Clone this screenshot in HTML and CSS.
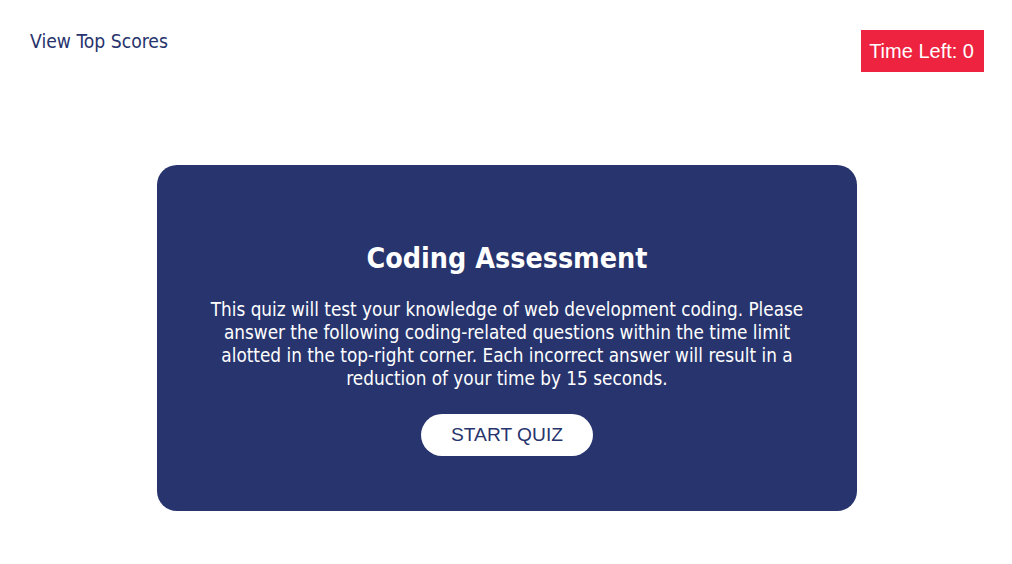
FILE: index.html
```html
<!DOCTYPE html>
<html lang="en">
<head>
<meta charset="utf-8">
<title>Coding Assessment</title>
<link rel="stylesheet" href="styles.css">
</head>
<body>
<header class="topbar">
  <a class="scores-link" href="#">View Top Scores</a>
  <div class="timer">Time Left: 0</div>
</header>
<main class="stage">
  <section class="card">
    <h1 class="title">Coding Assessment</h1>
    <p class="intro">This quiz will test your knowledge of web development coding. Please answer the following coding-related questions within the time limit alotted in the top-right corner. Each incorrect answer will result in a reduction of your time by 15 seconds.</p>
    <button class="start-btn" type="button">START QUIZ</button>
  </section>
</main>
</body>
</html>
```

FILE: styles.css
```css
html, body {
  margin: 0;
  padding: 0;
  background: #ffffff;
}

body {
  font-family: "DejaVu Sans Condensed", "DejaVu Sans", sans-serif;
  color: #27346d;
}

.topbar {
  display: flex;
  justify-content: space-between;
  align-items: flex-start;
  padding: 30px 28px 0 30px;
}

.scores-link {
  margin-top: 1px;
  font-size: 19.2px;
  line-height: 22px;
  color: #27346d;
  text-decoration: none;
}

.timer {
  font-family: "Liberation Sans", Arial, sans-serif;
  font-size: 20px;
  line-height: 22px;
  color: #ffffff;
  background: #ee2340;
  padding: 10px 10px 10px 8px;
}

.stage {
  display: flex;
  justify-content: center;
  padding: 93px 0 0 2px;
}

.card {
  width: 700px;
  height: 346px;
  box-sizing: border-box;
  background: #27346d;
  border-radius: 20px;
  padding: 76px 40px 0;
  display: flex;
  flex-direction: column;
  align-items: center;
  color: #ffffff;
  text-align: center;
}

.title {
  margin: 0;
  font-size: 28.4px;
  line-height: 36px;
  font-weight: bold;
}

.intro {
  margin: 21px 0 0;
  font-size: 18.8px;
  line-height: 23px;
}

.start-btn {
  margin-top: 24px;
  font-family: "Liberation Sans", Arial, sans-serif;
  font-size: 19.2px;
  color: #27346d;
  background: #ffffff;
  border: none;
  border-radius: 21px;
  width: 172px;
  height: 42px;
  padding: 0;
  cursor: pointer;
}
```
